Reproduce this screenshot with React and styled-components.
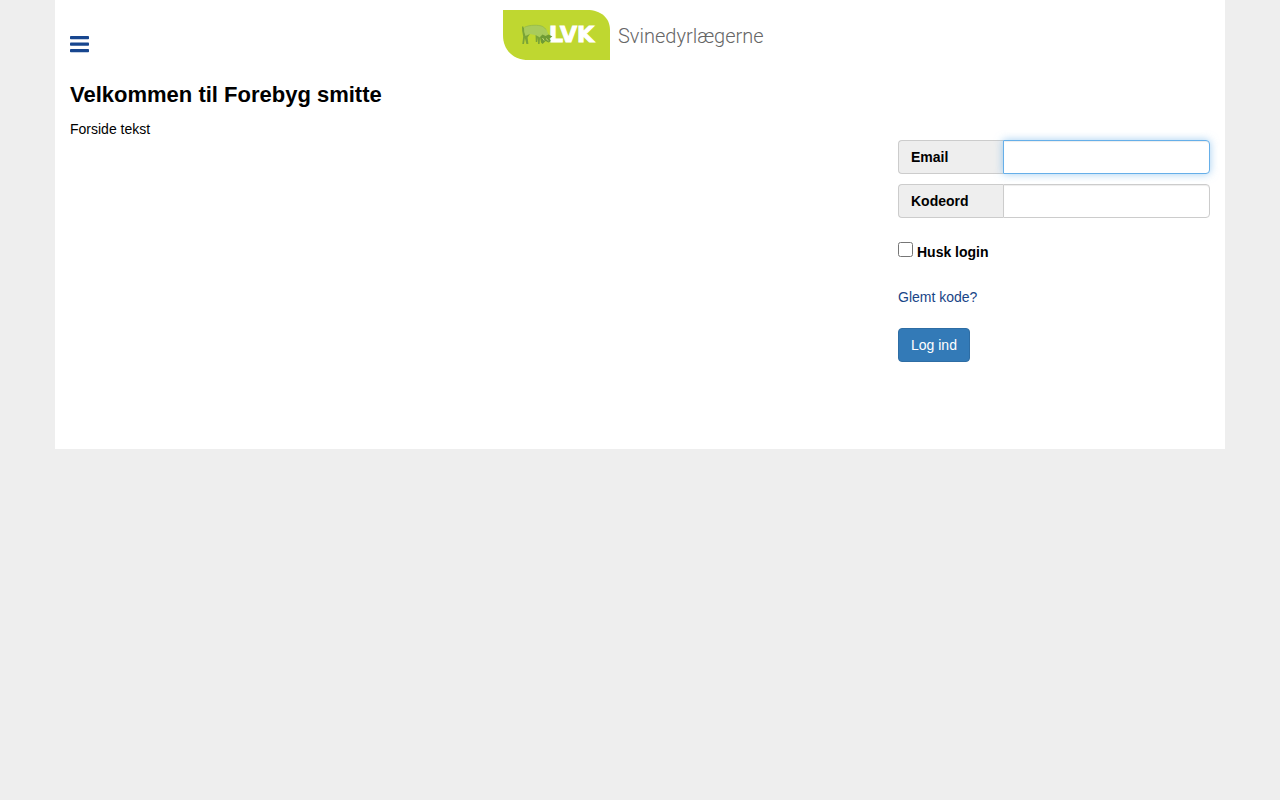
import React from 'react';
import styled, { createGlobalStyle } from 'styled-components';

const GlobalStyle = createGlobalStyle`
  * {
    box-sizing: border-box;
  }
  body {
    margin: 0;
    background: #eee;
    color: #000;
    font-family: 'Liberation Sans', Arial, sans-serif;
    font-size: 14px;
    line-height: 20px;
  }
`;

const s = {
  Container: styled.div`
    max-width: 1170px;
    margin: 0 auto;
    padding: 0 15px 87px;
    background: #fff;
  `,
  Header: styled.header`
    display: grid;
    grid-template-columns: 1fr auto 1fr;
    align-items: center;
    padding: 10px 0;
  `,
  MenuButton: styled.button`
    justify-self: start;
    margin-top: 18px;
    padding: 0;
    border: 0;
    background: none;
    color: #17468f;
    cursor: pointer;

    svg {
      display: block;
    }
  `,
  Logo: styled.svg`
    display: block;
    width: 274px;
    height: 50px;
  `,
  Title: styled.h1`
    margin: 13px 0 12px;
    font-size: 22px;
    line-height: 24px;
  `,
  Content: styled.main`
    display: grid;
    grid-template-columns: 1fr 312px;
    gap: 30px;

    @media (max-width: 767px) {
      grid-template-columns: 1fr;
    }
  `,
  Text: styled.p`
    margin: 0;
  `,
  Form: styled.form`
    margin-top: 21px;
  `,
  InputGroup: styled.div`
    display: flex;
    height: 34px;
    margin-bottom: 10px;
  `,
  Addon: styled.label`
    width: 105px;
    padding: 6px 12px;
    border: 1px solid #ccc;
    border-right: 0;
    border-radius: 4px 0 0 4px;
    background: #eee;
    font-weight: bold;
  `,
  Input: styled.input`
    flex: 1;
    min-width: 0;
    padding: 6px 12px;
    border: 1px solid #ccc;
    border-radius: 0 4px 4px 0;
    background: #fff;
    box-shadow: inset 0 1px 1px rgba(0, 0, 0, 0.075);
    color: #555;
    font: inherit;

    &:focus {
      z-index: 1;
      border-color: #66afe9;
      outline: 0;
      box-shadow: inset 0 1px 1px rgba(0, 0, 0, 0.075), 0 0 8px rgba(102, 175, 233, 0.6);
    }
  `,
  Remember: styled.div`
    display: flex;
    gap: 4px;
    margin: 24px 0 25px;
    font-weight: bold;
  `,
  Checkbox: styled.input`
    width: 15px;
    height: 15px;
    margin: 0;
  `,
  Link: styled.a`
    color: #194587;
    text-decoration: none;
  `,
  Submit: styled.button`
    display: block;
    margin-top: 21px;
    padding: 6px 12px;
    border: 1px solid #2e6da4;
    border-radius: 4px;
    background: #337ab7;
    color: #fff;
    font: inherit;
    cursor: pointer;
  `,
};

const MenuIcon = () => (
  <svg width="19" height="17" viewBox="0 0 19 17" fill="currentColor" aria-hidden="true">
    <rect y="0" width="19" height="3.2" rx="0.8" />
    <rect y="6.5" width="19" height="3.2" rx="0.8" />
    <rect y="13" width="19" height="3.2" rx="0.8" />
  </svg>
);

const Logo = () => (
  <s.Logo viewBox="0 0 274 50" role="img" aria-label="LVK Svinedyrlægerne">
    <path d="M0 0H84C98 0 107 8 107 20V50H26C10 50 0 40 0 25Z" fill="#bfd730" />
    <text
      x="46"
      y="32"
      fill="#fff"
      stroke="#fff"
      strokeWidth="1"
      fontFamily="'DejaVu Sans', sans-serif"
      fontWeight="bold"
      fontSize="22"
    >
      LVK
    </text>
    {/* pig: legs and tail, body, head */}
    <path
      d="M19 17L20 16 20.8 18 24 17 27.5 23 24.6 27.5 25.4 34H23.4L21.9 28 21 34H19.3L20.2 26.5 19.2 21ZM32.5 23H37.5L36.6 34H35L34.8 27.5 34.2 32H32.8Z"
      fill="#7aa437"
    />
    <path
      d="M21 17.5C26 14.6 35 14.4 40 16.4L43.4 19.5 45.4 24.5 41 27 37 27.5 33 25.2 27 24 22.5 26 21.2 22Z"
      fill="#a9cb5c"
    />
    <path
      d="M37 27L39.5 24.5 42.5 26 45.6 24.6 49.4 26.6 46.4 28.4 47.8 31 45.5 32.4 42.6 31 39.6 34 38 32.5Z"
      fill="#6f9b34"
    />
    <path d="M39.5 28L41.2 30.5M43 28.5L45.5 30.8" stroke="#d4e584" strokeWidth="0.8" />
    <path d="M21.5 17.2C27 14.8 35 14.6 39.8 16.5L43.3 19.6" fill="none" stroke="#8db43f" strokeWidth="0.6" />
    <text x="115" y="33" fill="#666" fontFamily="Roboto, sans-serif" fontWeight="300" fontSize="20">
      Svinedyrlægerne
    </text>
  </s.Logo>
);

const Field = ({ id, label, ...rest }) => (
  <s.InputGroup>
    <s.Addon htmlFor={id}>{label}</s.Addon>
    <s.Input id={id} name={id} {...rest} />
  </s.InputGroup>
);

const App = () => {
  return (
    <>
      <GlobalStyle />
      <s.Container>
        <s.Header>
          <s.MenuButton type="button" aria-label="Menu">
            <MenuIcon />
          </s.MenuButton>
          <Logo />
        </s.Header>
        <s.Title>Velkommen til Forebyg smitte</s.Title>
        <s.Content>
          <s.Text>Forside tekst</s.Text>
          <s.Form onSubmit={(e) => e.preventDefault()}>
            <Field id="email" label="Email" type="email" autoFocus />
            <Field id="password" label="Kodeord" type="password" />
            <s.Remember>
              <s.Checkbox id="remember" type="checkbox" />
              <label htmlFor="remember">Husk login</label>
            </s.Remember>
            <s.Link href="#">Glemt kode?</s.Link>
            <s.Submit type="submit">Log ind</s.Submit>
          </s.Form>
        </s.Content>
      </s.Container>
    </>
  );
};

export default App;
